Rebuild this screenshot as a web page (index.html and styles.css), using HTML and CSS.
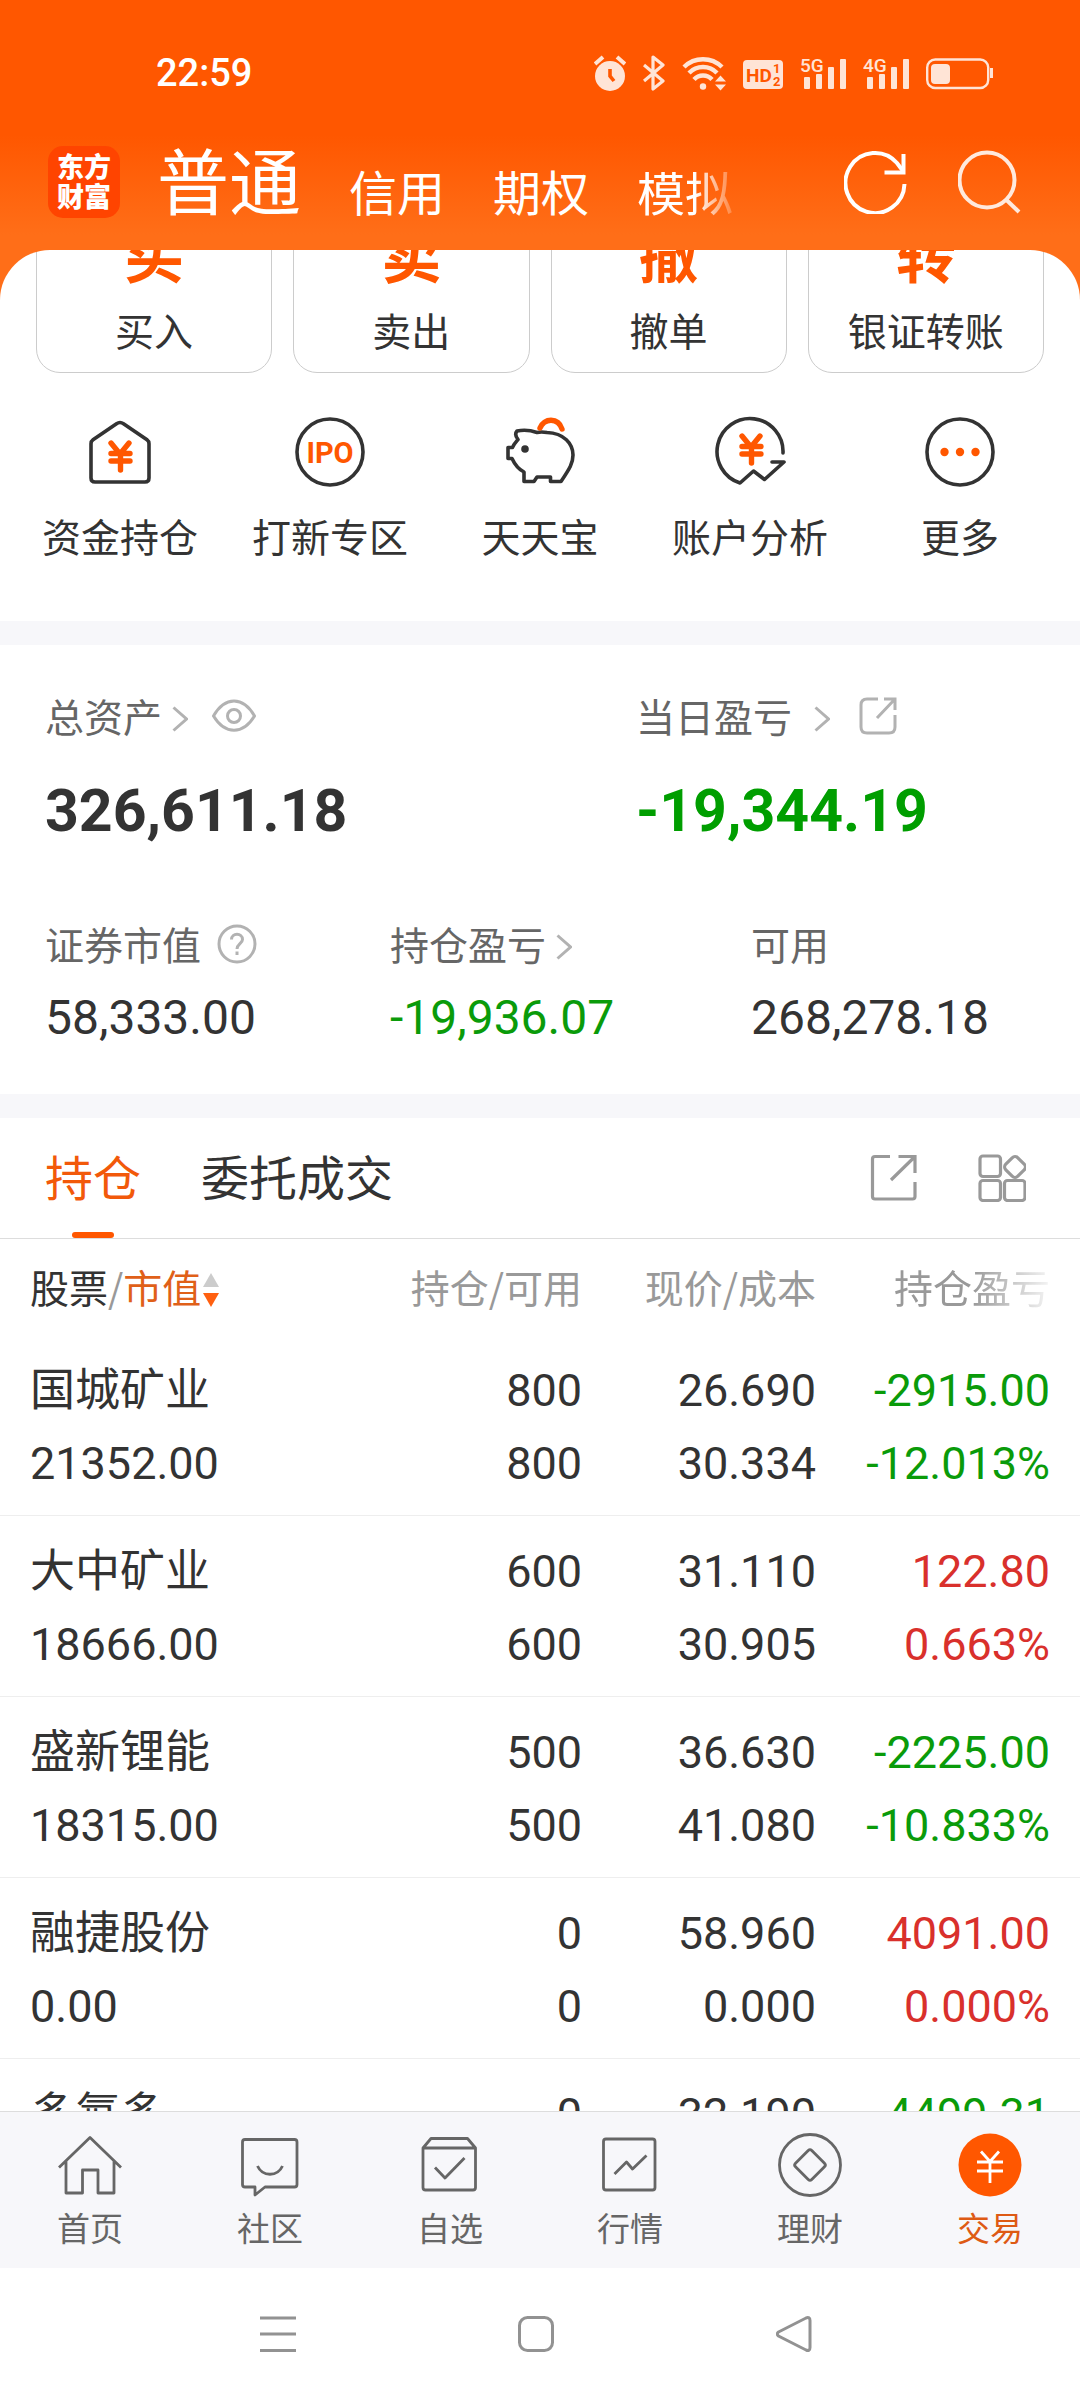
FILE: index.html
```html
<!DOCTYPE html>
<html lang="zh-CN">
<head>
<meta charset="utf-8">
<meta name="viewport" content="width=device-width, initial-scale=1">
<title>东方财富 - 交易</title>
<link rel="stylesheet" href="styles.css">
</head>
<body>
<div class="app">
  <header class="header">
    <div class="status">
      <time class="status-time">22:59</time>
      <div class="status-icons" aria-hidden="true">
        <svg width="32" height="36" viewBox="0 0 32 36"><circle cx="16" cy="21" r="15" fill="currentColor"/><path d="M1 9 9 2M23 2l8 7" stroke="currentColor" stroke-width="4"/><path d="M16 14v7l4 5" fill="none" stroke="#ff5700" stroke-width="3.6"/></svg>
        <svg width="22" height="36" viewBox="0 0 22 36"><path d="M1 10l19 16-10 8V2l10 8L1 26" fill="none" stroke="currentColor" stroke-width="3.2" stroke-linejoin="round"/></svg>
        <svg width="44" height="36" viewBox="0 0 44 36"><g fill="none" stroke="currentColor" stroke-width="4.4"><path d="M2 12a27 27 0 0 1 38 0"/><path d="M7 18a19.500 19.500 0 0 1 28 0"/><path d="M12 24.500a12 12 0 0 1 18 0"/></g><circle cx="21" cy="31.500" r="3.200" fill="currentColor"/><path d="M33 26.500l5.500-6 5.500 6zM33 29.500l5.500 6 5.500-6z" fill="currentColor"/></svg>
        <svg width="40" height="36" viewBox="0 0 40 36"><rect y="5" width="40" height="29" rx="4" fill="currentColor"/><g fill="#ff5700"><text class="hd" x="3" y="27">HD</text><text class="hd-small" x="30" y="18">1</text><text class="hd-small" x="30" y="31">2</text></g></svg>
        <svg width="46" height="36" viewBox="0 0 46 36"><g fill="currentColor"><text class="net" x="0" y="17">5G</text><rect x="4" y="22" width="6" height="12" rx="1"/><rect x="16" y="19" width="6" height="15" rx="1"/><rect x="28" y="12" width="6" height="22" rx="1"/><rect x="40" y="4" width="6" height="30" rx="1"/></g></svg>
        <svg width="46" height="36" viewBox="0 0 46 36"><g fill="currentColor"><text class="net" x="0" y="17">4G</text><rect x="4" y="22" width="6" height="12" rx="1"/><rect x="16" y="19" width="6" height="15" rx="1"/><rect x="28" y="12" width="6" height="22" rx="1"/><rect x="40" y="4" width="6" height="30" rx="1"/></g></svg>
        <svg width="68" height="36" viewBox="0 0 68 36"><rect x="1.200" y="4.500" width="61" height="28.500" rx="8" fill="none" stroke="currentColor" stroke-width="2.400"/><rect x="5" y="9" width="19" height="20" rx="4" fill="currentColor"/><path d="M65.500 13v10" stroke="currentColor" stroke-width="3"/></svg>
      </div>
    </div>
    <div class="titlebar">
      <a class="logo" href="#">东方<br>财富</a>
      <nav class="modes">
        <a class="mode mode-active" href="#">普通</a>
        <a class="mode" href="#">信用</a>
        <a class="mode" href="#">期权</a>
        <a class="mode mode-fade" href="#">模拟</a>
      </nav>
      <button class="icon-btn" type="button" aria-label="刷新">
        <svg width="64" height="64" viewBox="0 0 64 64" fill="none" stroke="#fff" stroke-width="4"><path d="M60.500 34A29.500 30 0 1 1 53 13l6 8"/><path d="M59.500 4v18.500H40.500"/></svg>
      </button>
      <button class="icon-btn" type="button" aria-label="搜索">
        <svg width="64" height="64" viewBox="0 0 64 64" fill="none" stroke="#ffe9dd" stroke-width="4"><circle cx="29" cy="30" r="27.500"/><path d="M48 49.500 61 62"/></svg>
      </button>
    </div>
  </header>

  <main class="sheet">
    <section class="actions">
      <a class="action" href="#"><b class="action-mark">买</b><span class="label">买入</span></a>
      <a class="action" href="#"><b class="action-mark">卖</b><span class="label">卖出</span></a>
      <a class="action" href="#"><b class="action-mark">撤</b><span class="label">撤单</span></a>
      <a class="action" href="#"><b class="action-mark">转</b><span class="label">银证转账</span></a>
    </section>

    <nav class="quick">
      <a class="quick-item" href="#">
        <svg class="quick-icon" viewBox="0 0 72 72"><path class="ink" d="M32.500 7.700 9 23.800q-2 1.400-2 4V62q0 4 4 4h50q4 0 4-4V27.800q0-2.600-2-4L39.500 7.700q-3.500-2.400-7 0z"/><path class="hot" d="M27 27l9 11 9-11M27 37.500h19M27 45h19M36.500 38v16"/></svg>
        <span class="label">资金持仓</span>
      </a>
      <a class="quick-item" href="#">
        <svg class="quick-icon" viewBox="0 0 72 72"><circle class="ink" cx="36" cy="36" r="33"/><text class="ipo" x="36" y="47">IPO</text></svg>
        <span class="label">打新专区</span>
      </a>
      <a class="quick-item" href="#">
        <svg class="quick-icon" viewBox="0 0 72 72"><path class="ink" d="M13 15q10-2 20 1.500 4-1 10 0C60 17 69 28 69 39c0 8-3 13-12 26.500H46.500V61H33l-3 4.500H20V56c-6-3-9-7-12-13.500H4V31.500h4.500c1-3 3-5 5.500-8q-4-5-1-8.500z"/><circle cx="21" cy="33" r="3.800" fill="#333"/><path class="hot" d="M36 12C40 2 54 1 58 13"/></svg>
        <span class="label">天天宝</span>
      </a>
      <a class="quick-item" href="#">
        <svg class="quick-icon" viewBox="0 0 72 72"><path class="ink" d="M69 37A33 33 0 1 0 26 67L39.500 55l11 8.500L70 46H58"/><path class="hot" d="M28 20l9 11 9-11M28 30.500h19M28 38h19M37.500 31v16"/></svg>
        <span class="label">账户分析</span>
      </a>
      <a class="quick-item" href="#">
        <svg class="quick-icon" viewBox="0 0 72 72"><circle class="ink" cx="36" cy="36" r="33"/><g fill="#ff5700"><circle cx="20.500" cy="36" r="4.200"/><circle cx="36" cy="36" r="4.200"/><circle cx="51.500" cy="36" r="4.200"/></g></svg>
        <span class="label">更多</span>
      </a>
    </nav>

    <section class="assets">
      <div class="assets-main">
        <div>
          <div class="asset-head">
            <a class="asset-label" href="#">总资产<svg class="chevron" viewBox="0 0 16 26"><path d="M1.500 1.500 14.500 13l-13 11.500"/></svg></a>
            <button class="icon-btn" type="button" aria-label="隐藏金额">
              <svg class="gray-icon" width="44" height="40" viewBox="0 0 44 40"><path d="M1.500 20C13 0 31 0 42.500 20 31 39 13 39 1.500 20z"/><circle cx="22" cy="20" r="6.500"/></svg>
            </button>
          </div>
          <strong class="amount">326,611.18</strong>
        </div>
        <div>
          <div class="asset-head">
            <a class="asset-label asset-label-wide" href="#">当日盈亏<svg class="chevron" viewBox="0 0 16 26"><path d="M1.500 1.500 14.500 13l-13 11.500"/></svg></a>
            <button class="icon-btn" type="button" aria-label="分享">
              <svg class="gray-icon" width="40" height="40" viewBox="0 0 40 40"><path d="M20 3H9Q3 3 3 9v22q0 6 6 6h22q6 0 6-6V19"/><path d="M26 3h11v11M36.500 3.500 19 22"/></svg>
            </button>
          </div>
          <strong class="amount amount-down">-19,344.19</strong>
        </div>
      </div>
      <div class="assets-sub">
        <div>
          <div class="asset-head">
            <span class="asset-label">证券市值</span>
            <button class="icon-btn" type="button" aria-label="说明">
              <svg class="gray-icon" width="40" height="40" viewBox="0 0 40 40"><circle cx="20" cy="20" r="18"/><path d="M14.500 15.500c0-7 11-7 11 0 0 4-5.500 4.500-5.500 9.500"/><path d="M20 27.500V31"/></svg>
            </button>
          </div>
          <span class="value">58,333.00</span>
        </div>
        <div>
          <div class="asset-head">
            <a class="asset-label" href="#">持仓盈亏<svg class="chevron" viewBox="0 0 16 26"><path d="M1.500 1.500 14.500 13l-13 11.500"/></svg></a>
          </div>
          <span class="value down">-19,936.07</span>
        </div>
        <div>
          <div class="asset-head"><span class="asset-label">可用</span></div>
          <span class="value">268,278.18</span>
        </div>
      </div>
    </section>

    <section class="holdings">
      <div class="tabs">
        <a class="tab tab-active" href="#">持仓</a>
        <a class="tab" href="#">委托成交</a>
        <div class="tab-tools">
          <button class="icon-btn" type="button" aria-label="分享持仓">
            <svg class="tool-icon" viewBox="0 0 48 48"><path d="M20 2.500H5Q2.500 2.500 2.500 5v37.500Q2.500 45 5 45h37.500Q45 45 45 42.500V28"/><path d="M28.500 2.500H45V19M44 3.500 21 26"/></svg>
          </button>
          <button class="icon-btn" type="button" aria-label="更多功能">
            <svg class="tool-icon" viewBox="0 0 48 48"><rect x="2" y="2" width="20.500" height="20.500" rx="3"/><rect x="2" y="26.500" width="20.500" height="20" rx="3"/><rect x="26.500" y="26.500" width="20.500" height="20" rx="3"/><rect x="28.500" y="4.500" width="17" height="17" rx="4" transform="rotate(45 37 13)"/></svg>
          </button>
        </div>
      </div>
      <table class="table">
        <colgroup><col><col class="col-qty"><col class="col-price"><col class="col-profit"></colgroup>
        <thead>
          <tr>
            <th scope="col"><span class="sort-name">股票</span>/<span class="sort-key">市值</span><svg class="sort" viewBox="0 0 16 36"><path d="M8 1l8 14H0z" fill="#ccc"/><path d="M8 35l8-14H0z" fill="#ff6010"/></svg></th>
            <th scope="col">持仓/可用</th>
            <th scope="col">现价/成本</th>
            <th scope="col"><span class="fade">持仓盈亏</span></th>
          </tr>
        </thead>
        <tbody>
          <tr><td>国城矿业<br>21352.00</td><td>800<br>800</td><td>26.690<br>30.334</td><td class="down">-2915.00<br>-12.013%</td></tr>
          <tr><td>大中矿业<br>18666.00</td><td>600<br>600</td><td>31.110<br>30.905</td><td class="up">122.80<br>0.663%</td></tr>
          <tr><td>盛新锂能<br>18315.00</td><td>500<br>500</td><td>36.630<br>41.080</td><td class="down">-2225.00<br>-10.833%</td></tr>
          <tr><td>融捷股份<br>0.00</td><td>0<br>0</td><td>58.960<br>0.000</td><td class="up">4091.00<br>0.000%</td></tr>
          <tr><td>多氟多<br>0.00</td><td>0<br>0</td><td>32.190<br>0.000</td><td class="down">-4499.31<br>0.000%</td></tr>
        </tbody>
      </table>
    </section>
  </main>

  <nav class="bottom-nav">
    <a class="nav-item" href="#"><svg class="nav-icon" viewBox="0 0 64 64"><path d="M1 34.500 32 4.500l31 30M8 28.500V60h16.500V37H40v23h16V28.500"/></svg>首页</a>
    <a class="nav-item" href="#"><svg class="nav-icon" viewBox="0 0 64 64"><path d="M7 6.500h49.500q2.500 0 2.500 2.500v42.500q0 2.500-2.500 2.500H27l-10 8v-8H7q-2.500 0-2.500-2.500V9Q4.500 6.500 7 6.500z"/><path d="M19.500 33c5 11 20 11 25 0"/></svg>社区</a>
    <a class="nav-item" href="#"><svg class="nav-icon" viewBox="0 0 64 64"><path d="M5 15v39.500Q5 57 7.500 57H55q2.500 0 2.500-2.500V15l-8-9.500H13L5 15h52.500"/><path d="M17 34.500 27 45l19.500-20"/></svg>自选</a>
    <a class="nav-item" href="#"><svg class="nav-icon" viewBox="0 0 64 64"><rect x="5.500" y="6" width="51.500" height="51" rx="2.500"/><path d="M16.500 41 28.500 29l6 7L48.500 22.500"/></svg>行情</a>
    <a class="nav-item" href="#"><svg class="nav-icon" viewBox="0 0 64 64"><circle cx="32" cy="32" r="30.500"/><rect x="20.500" y="20.500" width="23" height="23" rx="2.500" transform="rotate(45 32 32)"/></svg>理财</a>
    <a class="nav-item nav-active" href="#"><svg class="nav-icon" viewBox="0 0 64 64"><circle cx="32" cy="32" r="31.500" fill="#ff5700" stroke="none"/><path d="M23 18.500l9 10 9-10M19 29h26M19 38h26M32 29v21" stroke="#fff"/></svg>交易</a>
  </nav>

  <div class="system-bar">
    <button class="icon-btn" type="button" aria-label="最近任务"><svg class="sys-icon" viewBox="0 0 36 36"><path d="M0 2h36M0 18h36M0 34.500h36"/></svg></button>
    <button class="icon-btn" type="button" aria-label="主屏幕"><svg class="sys-icon" viewBox="0 0 36 36"><rect x="1.500" y="1.500" width="33" height="33" rx="8"/></svg></button>
    <button class="icon-btn" type="button" aria-label="返回"><svg class="sys-icon" viewBox="0 0 36 36"><path d="M2.500 16 30 2q4-1.500 4 2.500v27q0 4-4 2.500L2.500 20q-2.500-2 0-4z"/></svg></button>
  </div>
</div>
</body>
</html>
```

FILE: styles.css
```css
* {
  box-sizing: border-box;
}

body {
  margin: 0;
  font-family: Roboto, "Noto Sans CJK SC", sans-serif;
  font-weight: 400;
  color: #333;
}

a {
  color: inherit;
  text-decoration: none;
}

svg {
  display: block;
  flex: none;
}

.icon-btn {
  display: block;
  padding: 0;
  border: 0;
  background: none;
}

.app {
  display: flex;
  flex-direction: column;
  height: 100vh;
  background: #ff6e18;
}

/* Header */
.header {
  background: linear-gradient(#ff5700 54%, #ff6e18 94%);
  color: #fff;
}

.status {
  display: flex;
  justify-content: space-between;
  align-items: center;
  padding: 50px 86px 50px 156px;
}

.status-time {
  font-size: 38px;
  font-weight: 500;
  line-height: 46px;
}

.status-icons {
  display: flex;
  align-items: center;
  gap: 17px;
  color: #ffe4d6;
}

.hd,
.hd-small,
.net {
  font-family: Roboto, sans-serif;
  font-size: 19px;
  font-weight: 700;
}

.hd-small {
  font-size: 13px;
}

.net {
  font-weight: 500;
}

.titlebar {
  display: flex;
  align-items: center;
  padding: 0 58px 32px 48px;
}

.logo {
  width: 72px;
  padding: 5px 0 7px;
  border-radius: 15px;
  background: #ff4400;
  font-family: "Noto Sans CJK SC", sans-serif;
  font-size: 27px;
  font-weight: 900;
  line-height: 30px;
  text-align: center;
}

.modes {
  display: flex;
  flex: 1;
  align-items: flex-end;
  gap: 48px;
  height: 72px;
  margin-left: 37px;
}

.mode {
  font-size: 48px;
  line-height: 46px;
}

.mode-active {
  font-size: 72px;
  line-height: 66px;
}

.mode-fade {
  mask-image: linear-gradient(90deg, #000 60%, transparent 110%);
}

.titlebar .icon-btn + .icon-btn {
  margin-left: 50px;
}

/* Scrolling sheet */
.sheet {
  flex: 1;
  min-height: 0;
  overflow-y: auto;
  scrollbar-width: none;
  border-radius: 50px 50px 0 0;
  background: #fff;
}

.label {
  font-size: 39px;
  line-height: 48px;
}

.actions {
  display: grid;
  grid-template-columns: repeat(4, 1fr);
  gap: 21px;
  margin-top: -40px;
  padding: 0 36px;
}

.action {
  display: flex;
  flex-direction: column;
  align-items: center;
  gap: 15px;
  padding: 11px 0 15px;
  border: 1px solid #ccc;
  border-radius: 24px;
}

.action-mark {
  color: #ff5700;
  font-size: 60px;
  font-weight: 700;
  line-height: 72px;
}

.quick {
  display: grid;
  grid-template-columns: repeat(5, 1fr);
  padding: 43px 15px 58px;
}

.quick-item {
  display: flex;
  flex-direction: column;
  align-items: center;
  gap: 27px;
}

.quick-icon {
  width: 72px;
  height: 72px;
}

.ink {
  fill: none;
  stroke: #333;
  stroke-width: 3.6;
  stroke-linejoin: round;
  stroke-linecap: round;
}

.hot {
  fill: none;
  stroke: #ff5700;
  stroke-width: 5.4;
  stroke-linecap: round;
}

.ipo {
  fill: #ff5700;
  font-family: Roboto, sans-serif;
  font-size: 29px;
  font-weight: 700;
  text-anchor: middle;
}

/* Assets */
.assets {
  padding: 48px 50px 46px 45px;
  border-top: 24px solid #f7f7fa;
}

.assets-main {
  display: grid;
  grid-template-columns: 3fr 2fr;
}

.assets-sub {
  display: grid;
  grid-template-columns: 345fr 361fr 279fr;
  margin-top: 74px;
}

.asset-head {
  display: flex;
  align-items: center;
  gap: 24px;
  height: 48px;
}

.assets-sub .asset-head {
  gap: 16px;
}

.asset-head .icon-btn {
  margin-bottom: 2px;
}

.asset-label {
  display: flex;
  align-items: center;
  gap: 10px;
  padding-top: 3px;
  color: #666;
  font-size: 39px;
  line-height: 48px;
}

.asset-label-wide {
  gap: 22px;
  margin-right: 4px;
}

.chevron {
  width: 16px;
  height: 26px;
  fill: none;
  stroke: #b2b2b2;
  stroke-width: 3;
}

.gray-icon {
  fill: none;
  stroke: #b2b2b2;
  stroke-width: 3;
}

.amount {
  display: block;
  margin-top: 34px;
  font-size: 59px;
  font-weight: 700;
  line-height: 72px;
}

.value {
  display: block;
  margin-top: 19px;
  font-size: 48px;
  line-height: 60px;
}

.down {
  color: #0a9b0a;
}

.amount-down {
  color: #009e00;
}

.up {
  color: #d9302c;
}

/* Holdings */
.holdings {
  border-top: 24px solid #f7f7fa;
}

.tabs {
  display: flex;
  align-items: center;
  gap: 60px;
  padding: 0 54px 0 45px;
  border-bottom: 1px solid #ddd;
}

.tab {
  position: relative;
  padding-top: 4px;
  font-size: 48px;
  line-height: 116px;
}

.tab-active {
  color: #f2590a;
}

.tab-active::after {
  content: "";
  position: absolute;
  bottom: 0;
  left: 50%;
  width: 42px;
  height: 6px;
  margin-left: -21px;
  border-radius: 3px;
  background: #ff5700;
}

.tab-tools {
  display: flex;
  gap: 60px;
  margin-left: auto;
}

.tool-icon {
  width: 48px;
  height: 48px;
  fill: none;
  stroke: #999;
  stroke-width: 3.2;
}

.table {
  width: 100%;
  border-collapse: separate;
  border-spacing: 0;
  table-layout: fixed;
}

.col-qty,
.col-price {
  width: 234px;
}

.col-profit {
  width: 264px;
}

.table th {
  padding: 17px 0 19px;
  color: #999;
  font-family: "Noto Sans CJK SC", sans-serif;
  font-size: 39px;
  font-weight: 400;
  line-height: 60px;
  text-align: right;
  white-space: nowrap;
}

.table td {
  padding: 19px 0 15px;
  border-bottom: 1px solid #eee;
  font-size: 45px;
  line-height: 73px;
  text-align: right;
}

.table th:first-child,
.table td:first-child {
  padding-left: 30px;
  text-align: left;
}

.table th:last-child,
.table td:last-child {
  padding-right: 30px;
}

.sort-name {
  color: #333;
}

.sort-key {
  color: #e06018;
}

.sort {
  display: inline-block;
  width: 16px;
  height: 36px;
  margin-left: 2px;
  vertical-align: -5px;
}

.fade {
  display: inline-block;
  mask-image: linear-gradient(90deg, #000 50%, rgba(0, 0, 0, 0.1));
}

/* Bottom navigation */
.bottom-nav {
  display: grid;
  grid-template-columns: repeat(6, 1fr);
  padding: 21px 0 18px;
  border-top: 1px solid #ddd;
  background: #f7f7fa;
}

.nav-item {
  display: flex;
  flex-direction: column;
  align-items: center;
  gap: 13px;
  color: #666;
  font-size: 33px;
  line-height: 40px;
}

.nav-active {
  color: #de5a14;
}

.nav-icon {
  width: 64px;
  height: 64px;
  fill: none;
  stroke: currentColor;
  stroke-width: 2.8;
  stroke-linejoin: round;
}

.system-bar {
  display: flex;
  justify-content: center;
  gap: 222px;
  padding: 48px 8px 48px 0;
  background: #fff;
}

.sys-icon {
  width: 36px;
  height: 36px;
  fill: none;
  stroke: #929292;
  stroke-width: 3;
}
```
